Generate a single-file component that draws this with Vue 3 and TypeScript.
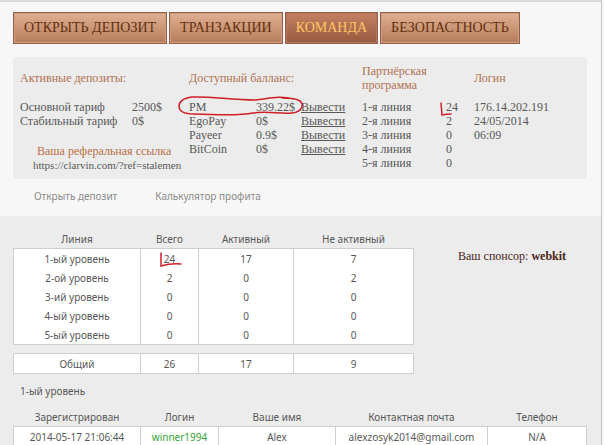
<script setup lang="ts">
interface Level {
  name: string
  total: number
  active: number
  inactive: number
}

const tabs = [
  { label: 'ОТКРЫТЬ ДЕПОЗИТ', active: false },
  { label: 'ТРАНЗАКЦИИ', active: false },
  { label: 'КОМАНДА', active: true },
  { label: 'БЕЗОПАСТНОСТЬ', active: false },
]

const deposits = [
  { name: 'Основной тариф', amount: '2500$' },
  { name: 'Стабильный тариф', amount: '0$' },
]

const balances = [
  { name: 'PM', amount: '339.22$' },
  { name: 'EgoPay', amount: '0$' },
  { name: 'Payeer', amount: '0.9$' },
  { name: 'BitCoin', amount: '0$' },
]

const lines = [24, 2, 0, 0, 0]
const loginInfo = ['176.14.202.191', '24/05/2014', '06:09']

const levels: Level[] = [
  { name: '1-ый уровень', total: 24, active: 17, inactive: 7 },
  { name: '2-ой уровень', total: 2, active: 0, inactive: 2 },
  { name: '3-ий уровень', total: 0, active: 0, inactive: 0 },
  { name: '4-ый уровень', total: 0, active: 0, inactive: 0 },
  { name: '5-ый уровень', total: 0, active: 0, inactive: 0 },
]

const members = [
  {
    registered: '2014-05-17 21:06:44',
    login: 'winner1994',
    name: 'Alex',
    email: 'alexzosyk2014@gmail.com',
    phone: 'N/A',
  },
]
</script>

<template>
  <div class="page">
    <header class="top">
      <nav class="tabs">
        <a v-for="tab in tabs" :key="tab.label" href="#" class="tab" :class="{ current: tab.active }">{{ tab.label }}</a>
      </nav>

      <section class="summary">
        <div class="group deposits">
          <h2>Активные депозиты:</h2>
          <table>
            <tbody>
              <tr v-for="d in deposits" :key="d.name">
                <td class="plan">{{ d.name }}</td>
                <td>{{ d.amount }}</td>
              </tr>
            </tbody>
          </table>
          <div class="referral">
            <h3>Ваша реферальная ссылка</h3>
            <p>https://clarvin.com/?ref=stalemen</p>
          </div>
        </div>

        <div class="group balances">
          <h2>Доступный балланс:</h2>
          <table>
            <tbody>
              <tr v-for="b in balances" :key="b.name">
                <td class="purse">{{ b.name }}</td>
                <td class="amount">{{ b.amount }}</td>
                <td><a href="#">Вывести</a></td>
              </tr>
            </tbody>
          </table>
          <svg class="ring" viewBox="0 0 128 24" aria-hidden="true">
            <path d="M117 4C101 0 91 4 78 5C54 5 33 1 15 2C6 3 2 7 2 11C2 17 8 19 17 19C40 20 63 21 76 18C90 16 103 19 115 18C126 17 128 8 121 5C117 3 112 3 105 3" />
          </svg>
        </div>

        <div class="group program">
          <h2>Партнёрская<br>программа</h2>
          <table>
            <tbody>
              <tr v-for="(count, i) in lines" :key="i">
                <td class="line">{{ i + 1 }}-я линия</td>
                <td class="count">
                  {{ count }}
                  <svg v-if="i === 0" class="tick-small" viewBox="0 0 14 16" aria-hidden="true">
                    <path d="M2 2L3 14Q7 13 12 13" />
                  </svg>
                </td>
              </tr>
            </tbody>
          </table>
        </div>

        <div class="group">
          <h2>Логин</h2>
          <p v-for="item in loginInfo" :key="item">{{ item }}</p>
        </div>
      </section>

      <nav class="links">
        <a href="#">Открыть депозит</a>
        <a href="#">Калькулятор профита</a>
      </nav>
    </header>

    <main class="content">
      <div class="overview">
        <table class="grid levels">
          <colgroup>
            <col class="c-line"><col class="c-total"><col class="c-active"><col>
          </colgroup>
          <thead>
            <tr><th>Линия</th><th>Всего</th><th>Активный</th><th>Не активный</th></tr>
          </thead>
          <tbody>
            <tr v-for="(level, i) in levels" :key="level.name">
              <td>{{ level.name }}</td>
              <td>
                <span class="value">
                  {{ level.total }}
                  <svg v-if="i === 0" class="tick" viewBox="0 0 24 18" aria-hidden="true">
                    <path d="M2 2V15Q12 12 22 13" />
                  </svg>
                </span>
              </td>
              <td>{{ level.active }}</td>
              <td>{{ level.inactive }}</td>
            </tr>
          </tbody>
          <tbody class="spacer"><tr><td colspan="4"></td></tr></tbody>
          <tfoot>
            <tr><td>Общий</td><td>26</td><td>17</td><td>9</td></tr>
          </tfoot>
        </table>
        <p class="sponsor">Ваш спонсор: <b>webkit</b></p>
      </div>

      <h2 class="level-title">1-ый уровень</h2>

      <table class="grid members">
        <colgroup>
          <col class="m-date"><col class="m-login"><col class="m-name"><col class="m-mail"><col>
        </colgroup>
        <thead>
          <tr><th>Зарегистрирован</th><th>Логин</th><th>Ваше имя</th><th>Контактная почта</th><th>Телефон</th></tr>
        </thead>
        <tbody>
          <tr v-for="m in members" :key="m.login">
            <td>{{ m.registered }}</td>
            <td class="user">{{ m.login }}</td>
            <td>{{ m.name }}</td>
            <td>{{ m.email }}</td>
            <td>{{ m.phone }}</td>
          </tr>
        </tbody>
      </table>
    </main>
  </div>
</template>

<style>
html {
  background: #f7f7f7;
  scrollbar-width: none;
}
</style>

<style scoped>
.page {
  box-sizing: border-box;
  min-height: 100vh;
  margin-right: 2px;
  border-top: 2px solid #d9dada;
  border-right: 1px solid #c4c4c4;
  background: #ececec;
  color: #585858;
  font: 10px/14px "Noto Sans", sans-serif;
}

h2,
h3,
p {
  margin: 0;
  font-size: inherit;
  font-weight: normal;
}

table {
  border-collapse: collapse;
}

td,
th {
  padding: 0;
  font-weight: normal;
}

.top {
  padding: 10px 14px 3px 13px;
  background: #f7f7f7;
}

.tabs {
  display: flex;
  gap: 2px;
}

.tab {
  padding: 6px 10px;
  border: 1px solid #8d6049;
  background: linear-gradient(#e0b092, #b67c5b);
  box-shadow: inset 0 0 0 1px #d29d7e;
  color: #63300f;
  font: 14px/18px "Liberation Serif", serif;
  text-decoration: none;
  white-space: nowrap;
}

.tab.current {
  background: linear-gradient(#c58062, #965a40);
  box-shadow: inset 0 0 0 1px #b97459;
  color: #ffc663;
}

.summary {
  display: grid;
  grid-template-columns: 169fr 173fr 112fr 113fr;
  margin-top: 13px;
  padding: 7px 0 7px 7px;
  background: #ececec;
  font: 12px/14px "Liberation Serif", serif;
}

.group {
  position: relative;
  min-width: 0;
}

.group h2 {
  display: flex;
  align-items: center;
  height: 28px;
  margin-bottom: 8px;
  color: #b07250;
}

.plan {
  width: 112px;
}

.purse {
  width: 67px;
}

.amount {
  width: 45px;
}

.line {
  width: 84px;
}

.balances a {
  color: inherit;
}

.count {
  position: relative;
}

.referral {
  margin-top: 16px;
  padding-left: 13px;
  font-size: 11px;
  white-space: nowrap;
}

.referral h3 {
  padding-left: 4px;
  color: #b86f42;
  font-size: 12px;
}

.ring,
.tick-small,
.tick {
  position: absolute;
  fill: none;
  stroke: #cf2026;
  stroke-width: 1.5;
  stroke-linecap: round;
}

.ring {
  top: 31px;
  left: -12px;
  width: 128px;
  height: 24px;
}

.tick-small {
  top: 1px;
  left: -7px;
  width: 14px;
  height: 16px;
}

.links {
  display: flex;
  gap: 38px;
  padding: 10px 21px;
}

.links a {
  color: #8c8c8c;
  text-decoration: none;
}

.content {
  padding: 14px 14px 0 13px;
}

.overview {
  display: flex;
  gap: 44px;
}

.grid {
  table-layout: fixed;
  text-align: center;
}

.grid th {
  height: 18px;
}

.grid td {
  height: 19px;
  border: solid #cfcfcf;
  border-width: 0 1px;
  background: #fff;
}

.grid tbody,
.grid tfoot {
  border: 1px solid #cfcfcf;
}

.grid .spacer {
  border-width: 1px 0;
}

.grid .spacer td {
  height: 8px;
  border: 0;
  background: #ececec;
}

.levels {
  width: 401px;
}

.c-line,
.m-date {
  width: 127px;
}

.c-total {
  width: 58px;
}

.c-active {
  width: 95px;
}

.value {
  position: relative;
}

.tick {
  top: -1px;
  left: -5px;
  width: 24px;
  height: 18px;
}

.sponsor {
  padding-top: 19px;
  color: #4b2418;
  font: 12px/14px "Liberation Serif", serif;
}

.level-title {
  margin: 10px 0 10px 7px;
}

.members {
  width: 100%;
}

.m-login {
  width: 78px;
}

.m-name {
  width: 117px;
}

.m-mail {
  width: 152px;
}

.user {
  color: #35a535;
}
</style>
